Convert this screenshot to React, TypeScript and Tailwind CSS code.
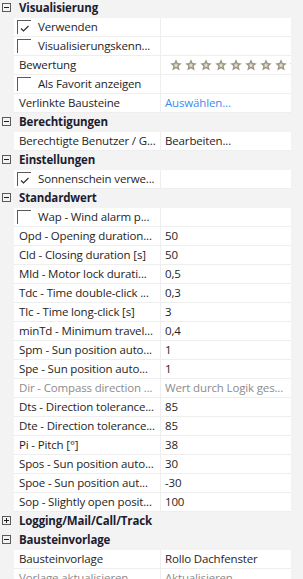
type Row =
  | { kind: "head"; label: string; open: boolean }
  | { kind: "prop"; label: string; value?: string; check?: boolean; checked?: boolean; tone?: "link" | "muted"; stars?: boolean; dim?: boolean };

const rows: Row[] = [
  { kind: "head", label: "Visualisierung", open: true },
  { kind: "prop", label: "Verwenden", check: true, checked: true },
  { kind: "prop", label: "Visualisierungskenn...", check: true },
  { kind: "prop", label: "Bewertung", stars: true },
  { kind: "prop", label: "Als Favorit anzeigen", check: true },
  { kind: "prop", label: "Verlinkte Bausteine", value: "Auswählen...", tone: "link" },
  { kind: "head", label: "Berechtigungen", open: true },
  { kind: "prop", label: "Berechtigte Benutzer / G...", value: "Bearbeiten..." },
  { kind: "head", label: "Einstellungen", open: true },
  { kind: "prop", label: "Sonnenschein verwe...", check: true, checked: true },
  { kind: "head", label: "Standardwert", open: true },
  { kind: "prop", label: "Wap - Wind alarm p...", check: true },
  { kind: "prop", label: "Opd - Opening duration...", value: "50" },
  { kind: "prop", label: "Cld - Closing duration [s]", value: "50" },
  { kind: "prop", label: "Mld - Motor lock durati...", value: "0,5" },
  { kind: "prop", label: "Tdc - Time double-click ...", value: "0,3" },
  { kind: "prop", label: "Tlc - Time long-click [s]", value: "3" },
  { kind: "prop", label: "minTd - Minimum travel...", value: "0,4" },
  { kind: "prop", label: "Spm - Sun position auto...", value: "1" },
  { kind: "prop", label: "Spe - Sun position auto...", value: "1" },
  { kind: "prop", label: "Dir - Compass direction ...", value: "Wert durch Logik ges...", dim: true },
  { kind: "prop", label: "Dts - Direction tolerance...", value: "85" },
  { kind: "prop", label: "Dte - Direction tolerance...", value: "85" },
  { kind: "prop", label: "Pi - Pitch [°]", value: "38" },
  { kind: "prop", label: "Spos - Sun position auto...", value: "30" },
  { kind: "prop", label: "Spoe - Sun position aut...", value: "-30" },
  { kind: "prop", label: "Sop - Slightly open posit...", value: "100" },
  { kind: "head", label: "Logging/Mail/Call/Track", open: false },
  { kind: "head", label: "Bausteinvorlage", open: true },
  { kind: "prop", label: "Bausteinvorlage", value: "Rollo Dachfenster" },
  { kind: "prop", label: "Vorlage aktualisieren", value: "Aktualisieren", dim: true },
];

const Toggle = ({ open }: { open: boolean }) => (
  <svg width="9" height="9" viewBox="0 0 9 9" className="ml-[2px] mt-[4px] shrink-0">
    <rect x="0.5" y="0.5" width="8" height="8" fill="none" stroke="#5a5a5a" />
    <path d="M2 4.5h5" stroke="#1e1e1e" />
    {!open && <path d="M4.5 2v5" stroke="#1e1e1e" />}
  </svg>
);

const Check = ({ checked }: { checked?: boolean }) => (
  <div className="relative ml-[3px] mt-[2px] h-[14px] w-[14px] shrink-0 border-l border-t border-[#5a5a5a]">
    {checked && (
      <svg width="10" height="8" viewBox="0 0 10 8" className="absolute left-[2px] top-[4px]">
        <path d="M1 3.5 L3.5 6 L8.5 1" fill="none" stroke="#2a2a2a" strokeWidth="1.1" />
      </svg>
    )}
  </div>
);

const Star = () => (
  <svg width="12" height="12" viewBox="0 0 12 12" className="shrink-0">
    <polygon points="6,0.3 7.7,4.1 11.8,4.4 8.7,7.1 9.7,11.5 6,9.2 2.3,11.5 3.3,7.1 0.2,4.4 4.3,4.1" fill="#9d9680" />
    <polygon points="6,3.8 6.8,5.4 8.4,5.5 7.2,6.6 7.6,8.4 6,7.5 4.4,8.4 4.8,6.6 3.6,5.5 5.2,5.4" fill="#e4e0d2" />
  </svg>
);

export default function App() {
  return (
    <div className="h-[579px] w-[303px] overflow-hidden bg-[#f3f3f3] font-['Segoe_UI','Open_Sans',sans-serif] text-[11.5px] leading-[18px] tracking-[-0.15px] text-[#1e1e1e]">
      <div className="-mt-px w-[291px]">
        {rows.map((r, i) =>
          r.kind === "head" ? (
            <div key={i} className="flex h-[19px] items-start">
              <Toggle open={r.open} />
              <span className="ml-[8px] font-bold text-[#1c1c30]">{r.label}</span>
            </div>
          ) : (
            <div key={i} className="ml-[14px] flex h-[19px] border-b border-[#eeeeee] bg-white">
              <div className={`flex w-[147px] shrink-0 items-start overflow-hidden whitespace-nowrap border-r border-[#eeeeee] ${r.dim ? "text-[#8c8c8c]" : ""}`}>
                {r.check ? (
                  <>
                    <Check checked={r.checked} />
                    <span className="ml-[7px]">{r.label}</span>
                  </>
                ) : (
                  <span className="ml-[5px]">{r.label}</span>
                )}
              </div>
              <div className={`flex min-w-0 flex-1 items-center overflow-hidden whitespace-nowrap pl-[4px] ${r.tone === "link" ? "text-[#3b8cf0]" : ""} ${r.dim ? "text-[#8c8c8c]" : ""}`}>
                {r.stars ? (
                  <div className="ml-[5px] flex gap-[3px]">
                    {Array.from({ length: 9 }).map((_, k) => (
                      <Star key={k} />
                    ))}
                  </div>
                ) : (
                  <span>{r.value}</span>
                )}
              </div>
            </div>
          )
        )}
      </div>
    </div>
  );
}
